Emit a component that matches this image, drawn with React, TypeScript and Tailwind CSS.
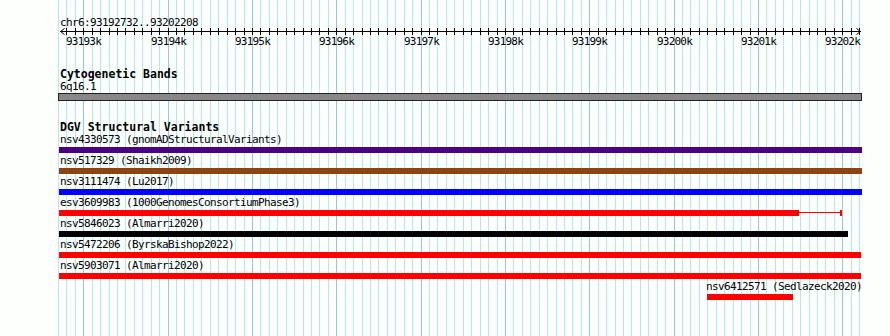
import React from "react";

const MONO = { fontFamily: '"DejaVu Sans Mono", "Liberation Mono", monospace' };

const BASE_X = 83.3;
const STEP = 8.433;
const gridXs = Array.from({ length: 96 }, (_, k) => ({
  x: Math.round(BASE_X + (k - 3) * STEP) + 0.5,
  major: (k - 3) % 10 === 0,
}));

const majors = Array.from({ length: 10 }, (_, i) => ({
  x: Math.round(BASE_X + i * 10 * STEP) + 0.5,
  label: `${93193 + i}k`,
}));

type Feature = {
  label: string;
  color: string;
  x1: number;
  x2: number;
  labelX?: number;
  thinTo?: number;
};

const features: Feature[] = [
  { label: "nsv4330573 (gnomADStructuralVariants)", color: "#4b0082", x1: 59, x2: 862 },
  { label: "nsv517329 (Shaikh2009)", color: "#8b4513", x1: 59, x2: 862 },
  { label: "nsv3111474 (Lu2017)", color: "#0000ff", x1: 59, x2: 862 },
  { label: "esv3609983 (1000GenomesConsortiumPhase3)", color: "#ff0000", x1: 59, x2: 799, thinTo: 842 },
  { label: "nsv5846023 (Almarri2020)", color: "#000000", x1: 59, x2: 848 },
  { label: "nsv5472206 (ByrskaBishop2022)", color: "#ff0000", x1: 59, x2: 861 },
  { label: "nsv5903071 (Almarri2020)", color: "#ff0000", x1: 59, x2: 861 },
  { label: "nsv6412571 (Sedlazeck2020)", color: "#ff0000", x1: 707, x2: 793, labelX: 706 },
];

function FeatureRow({ f }: { f: Feature }) {
  return (
    <div className="flex flex-col pb-[1px]">
      <div className="pt-[1px]" style={{ paddingLeft: f.labelX ?? 60 }}>
        <div className="h-[12px] whitespace-nowrap text-[11px] leading-[12px] tracking-[-0.62px] text-black">
          {f.label}
        </div>
      </div>
      <div className="mt-[1px] flex h-[6px] items-start" style={{ paddingLeft: f.x1 }}>
        <div className="h-[6px]" style={{ width: f.x2 - f.x1, backgroundColor: f.color }} />
        {f.thinTo !== undefined && (
          <>
            <div className="mt-[2px] h-px" style={{ width: f.thinTo - f.x2 - 2, backgroundColor: f.color }} />
            <div className="h-[6px] w-[2px]" style={{ backgroundColor: f.color }} />
          </>
        )}
      </div>
    </div>
  );
}

export default function App() {
  return (
    <div className="relative h-[336px] w-[890px] overflow-hidden bg-[#fcfffc]" style={MONO}>
      <svg className="absolute inset-0" width={890} height={336}>
        {gridXs.map((g, i) => (
          <line
            key={i}
            x1={g.x}
            x2={g.x}
            y1={0}
            y2={336}
            stroke={g.major ? "#8ccaee" : "#b2eaf0"}
            strokeWidth={1}
          />
        ))}
      </svg>

      <div className="relative flex flex-col pt-[16px]">
        <div className="h-[12px] pl-[60px] text-[11px] leading-[13px] tracking-[-0.62px] text-black">
          chr6:93192732..93202208
        </div>
        <svg width={890} height={19} className="block">
          <rect x={60} y={3} width={801} height={1} fill="#000" />
          {gridXs.slice(1).map((g, i) => (
            <rect key={i} x={g.x - 0.5} y={0} width={1} height={7} fill="#000" />
          ))}
          <polyline points="64.5,0.5 60.5,3.5 64.5,6.5" fill="none" stroke="#000" strokeWidth={1} />
          <polyline points="856.5,0.5 860.5,3.5 856.5,6.5" fill="none" stroke="#000" strokeWidth={1} />
          {majors.map((m) => (
            <text
              key={m.label}
              x={m.x}
              y={16.5}
              textAnchor="middle"
              fontSize={11}
              letterSpacing={-0.8}
              fill="#000"
              style={MONO}
            >
              {m.label}
            </text>
          ))}
        </svg>

        <div className="mt-[21px] h-[12px] pl-[60px] text-[11.5px] font-bold leading-[12px] text-black">
          Cytogenetic Bands
        </div>
        <div className="pt-[1px] pl-[60px]">
          <div className="h-[11px] text-[11px] leading-[11px] tracking-[-0.62px] text-black">6q16.1</div>
        </div>
        <div className="ml-[58px] mt-[1px] h-[8px] w-[804px] border border-[#222] bg-[#888]" />

        <div className="mt-[20px] h-[12px] pl-[60px] text-[11.5px] font-bold leading-[12px] text-black">
          DGV Structural Variants
        </div>
        {features.map((f) => (
          <FeatureRow key={f.label} f={f} />
        ))}
      </div>
    </div>
  );
}
